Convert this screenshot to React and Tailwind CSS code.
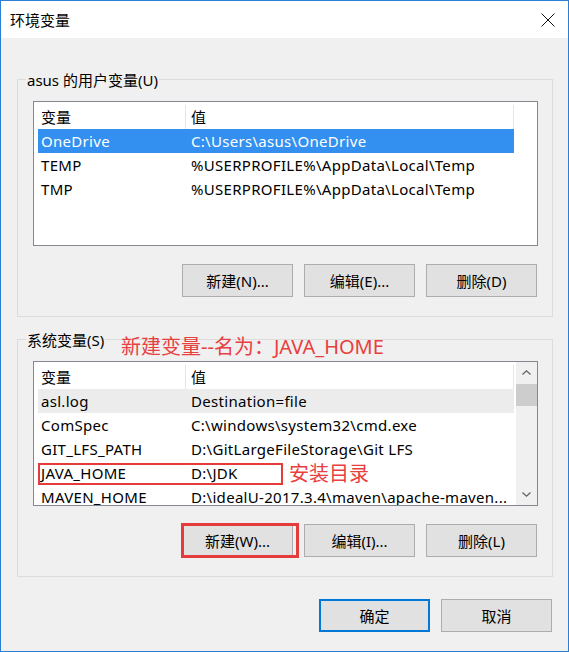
import React from 'react';

const userVars = [
  { name: 'OneDrive', value: 'C:\\Users\\asus\\OneDrive', state: 'active' },
  { name: 'TEMP', value: '%USERPROFILE%\\AppData\\Local\\Temp' },
  { name: 'TMP', value: '%USERPROFILE%\\AppData\\Local\\Temp' },
];

const systemVars = [
  { name: 'asl.log', value: 'Destination=file', state: 'inactive' },
  { name: 'ComSpec', value: 'C:\\windows\\system32\\cmd.exe' },
  { name: 'GIT_LFS_PATH', value: 'D:\\GitLargeFileStorage\\Git LFS' },
  { name: 'JAVA_HOME', value: 'D:\\JDK' },
  { name: 'MAVEN_HOME', value: 'D:\\idealU-2017.3.4\\maven\\apache-maven...' },
];

// fila de la lista
function VarRow({ item }) {
  let tone = 'text-black';
  if (item.state === 'active') tone = 'bg-[#3390f0] text-white';
  if (item.state === 'inactive') tone = 'bg-[#ececec] text-black';
  return (
    <div className={`ml-[4px] w-[476px] h-[24px] shrink-0 flex items-center pl-[3px] whitespace-nowrap tracking-[0.3px] ${tone}`}>
      <span className="w-[150px] shrink-0">{item.name}</span>
      <span className="overflow-hidden">{item.value}</span>
    </div>
  );
}

function ListHeader() {
  return (
    <div className="flex h-[27px] shrink-0 pt-[3px]">
      <div className="w-[152px] pl-[7px] flex items-center border-r border-[#e5e5e5]">变量</div>
      <div className="w-[328px] pl-[5px] flex items-center border-r border-[#e5e5e5]">值</div>
    </div>
  );
}

function Chevron({ up }) {
  return (
    <svg width="9" height="5" viewBox="0 0 9 5" className="text-[#606060]">
      <path d={up ? 'M0.5 4.5 L4.5 0.8 L8.5 4.5' : 'M0.5 0.5 L4.5 4.2 L8.5 0.5'} fill="none" stroke="currentColor" strokeWidth="1.2" />
    </svg>
  );
}

function Button({ children, primary }) {
  return (
    <div
      className={`w-[111px] h-[33px] flex items-center justify-center bg-[#e1e1e1] ${
        primary ? 'border-2 border-[#0078d7]' : 'border border-[#adadad]'
      }`}
    >
      {children}
    </div>
  );
}

function GroupBox({ label, children, extra }) {
  return (
    <div className="relative w-[536px] h-[238px] border border-[#dcdcdc] pl-[15px] pt-[21px]">
      <div className="absolute -top-[10px] left-[8px] px-[1px] bg-[#f0f0f0] leading-[20px] whitespace-nowrap">
        {label}
      </div>
      {extra}
      {children}
    </div>
  );
}

export default function App() {
  return (
    <div className="w-[569px] h-[652px] overflow-hidden border border-[#2a7fd4] bg-[#f0f0f0] flex flex-col font-['Noto_Sans','Noto_Sans_CJK_SC',sans-serif] text-[15px] leading-[20px] text-black">
      {/* barra de título */}
      <div className="h-[37px] shrink-0 bg-white flex items-center justify-between pl-[9px] pr-[13px]">
        <span>环境变量</span>
        <svg width="14" height="14" viewBox="0 0 14 14">
          <path d="M0.5 0.5 L13.5 13.5 M13.5 0.5 L0.5 13.5" stroke="#111" strokeWidth="1" />
        </svg>
      </div>

      <div className="pl-[16px] pt-[41px] flex flex-col">
        {/* variables de usuario */}
        <GroupBox label="asus 的用户变量(U)">
          <div className="w-[505px] h-[145px] border border-[#828790] bg-white overflow-hidden flex flex-col">
            <ListHeader />
            {userVars.map((v) => (
              <VarRow key={v.name} item={v} />
            ))}
          </div>
          <div className="mt-[18px] w-[505px] flex justify-end gap-[11px] pr-[1px]">
            <Button>新建(N)...</Button>
            <Button>编辑(E)...</Button>
            <Button>删除(D)</Button>
          </div>
        </GroupBox>

        {/* variables del sistema */}
        <div className="mt-[22px]">
          <GroupBox
            label="系统变量(S)"
            extra={
              <div className="absolute -top-[3px] left-[103px] text-[20px] leading-[20px] text-[#e84040] whitespace-nowrap">
                新建变量--名为：JAVA_HOME
              </div>
            }
          >
            <div className="relative w-[505px] h-[145px] border border-[#828790] bg-white overflow-hidden flex">
              <div className="w-[482px] flex flex-col">
                <ListHeader />
                {systemVars.map((v) => (
                  <VarRow key={v.name} item={v} />
                ))}
              </div>
              <div className="w-[21px] bg-[#f0f0f0] flex flex-col">
                <div className="h-[21px] flex items-center justify-center">
                  <Chevron up />
                </div>
                <div className="mt-[1px] h-[22px] bg-[#cdcdcd]" />
                <div className="flex-1" />
                <div className="h-[21px] flex items-center justify-center">
                  <Chevron />
                </div>
              </div>
              {/* marca roja en JAVA_HOME */}
              <div className="absolute left-[4px] top-[101px] w-[245px] h-[22px] border-2 border-[#e53b3b]" />
              <div className="absolute left-[255px] top-[101px] text-[20px] leading-[22px] text-[#e84040] whitespace-nowrap">
                安装目录
              </div>
            </div>
            <div className="mt-[18px] w-[505px] flex justify-end gap-[11px] pr-[1px]">
              <div className="relative">
                <Button>新建(W)...</Button>
                <div className="absolute -left-[1px] -top-[1px] w-[118px] h-[35px] border-[3px] border-[#e53b3b]" />
              </div>
              <Button>编辑(I)...</Button>
              <Button>删除(L)</Button>
            </div>
          </GroupBox>
        </div>

        {/* botones inferiores */}
        <div className="mt-[22px] w-[536px] flex justify-end gap-[11px] pr-[1px]">
          <Button primary>确定</Button>
          <Button>取消</Button>
        </div>
      </div>
    </div>
  );
}
